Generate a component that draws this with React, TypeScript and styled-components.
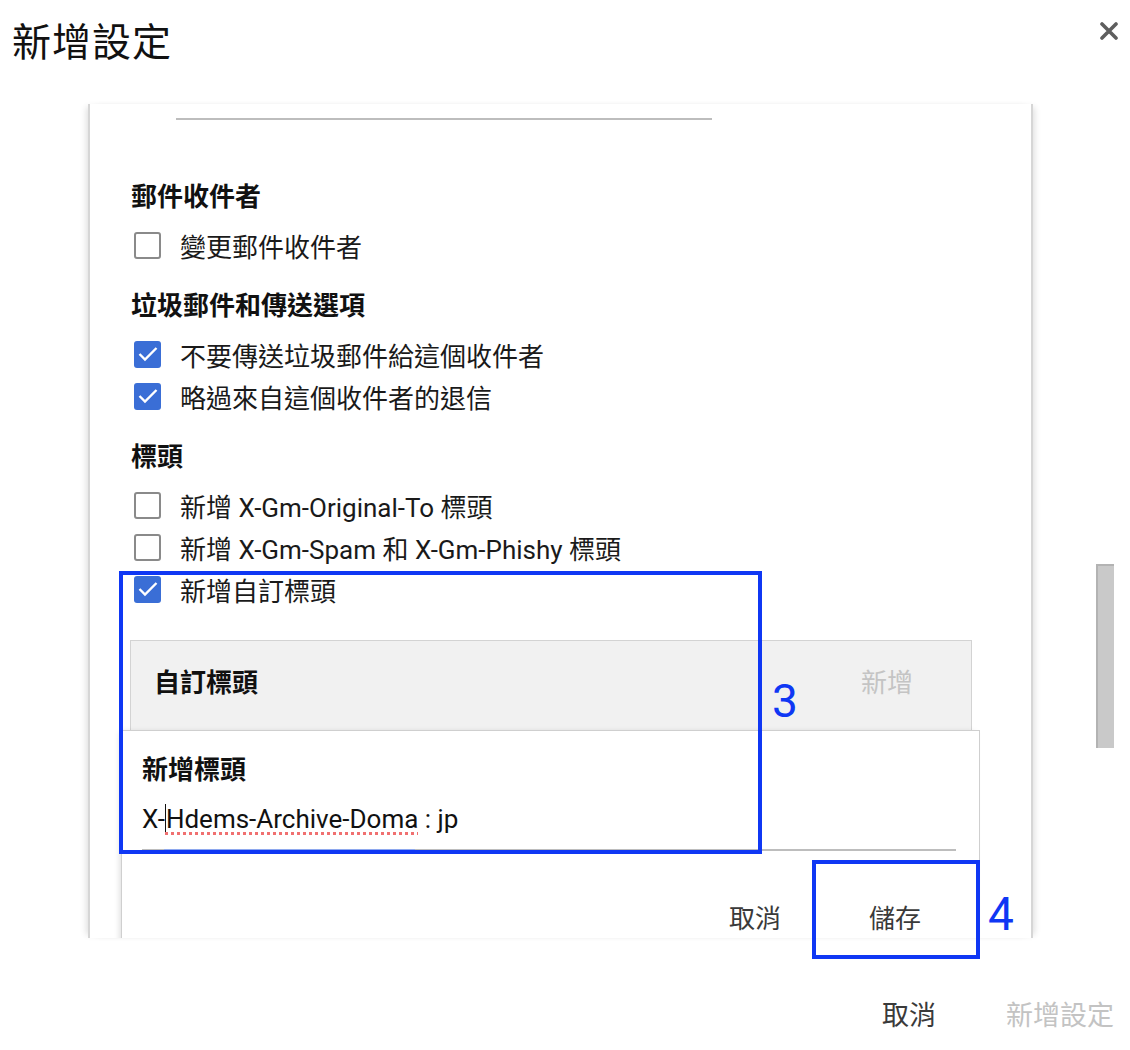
import React from 'react';
import styled, { createGlobalStyle } from 'styled-components';

const GlobalStyle = createGlobalStyle`
  html, body {
    margin: 0;
    padding: 0;
    background: #ffffff;
  }
  body {
    font-family: Roboto, "Noto Sans CJK TC", "Noto Sans", sans-serif;
    color: #111111;
  }
`;

const Page = styled.div`
  width: 1130px;
  height: 1050px;
  overflow: hidden;
  display: flex;
  flex-direction: column;
`;

const TopBar = styled.div`
  height: 104px;
  display: flex;
  align-items: flex-start;
  justify-content: space-between;
  padding: 0 12px;
`;

const Title = styled.h1`
  margin: 0;
  font-size: 39px;
  font-weight: 400;
  line-height: 86px;
  letter-spacing: 1px;
  color: #111;
`;

const CloseButton = styled.button`
  margin-top: 20px;
  margin-right: -2px;
  border: 0;
  background: none;
  padding: 0;
  width: 22px;
  height: 22px;
  display: flex;
  align-items: center;
  justify-content: center;
  cursor: pointer;
`;

const Body = styled.div`
  position: relative;
  display: flex;
  height: 834px;
`;

const Panel = styled.div`
  margin-left: 88px;
  width: 945px;
  height: 834px;
  overflow: hidden;
  background: #fff;
  border-left: 2px solid #d6d6d6;
  border-right: 2px solid #d6d6d6;
  box-sizing: border-box;
  box-shadow: -5px 0 6px -3px rgba(0, 0, 0, 0.12), 5px 0 6px -3px rgba(0, 0, 0, 0.12);
`;

const ScrollTrack = styled.div`
  margin-left: 63px;
  width: 18px;
  padding-top: 460px;
`;

const ScrollThumb = styled.div`
  height: 184px;
  background: #c9c9c9;
  border-left: 2px solid #b3b3b3;
  border-top: 2px solid #b3b3b3;
  box-sizing: border-box;
`;

const TopFieldLine = styled.div`
  margin: 14px 0 0 86px;
  width: 536px;
  height: 2px;
  background: #bdbdbd;
`;

const Section = styled.div<{ $first?: boolean }>`
  margin-top: ${({ $first }) => ($first ? '59px' : '22px')};
  padding-left: 41px;
`;

const SectionTitle = styled.div`
  font-size: 26px;
  font-weight: 700;
  line-height: 36px;
  margin-bottom: 9px;
`;

const Row = styled.label`
  display: flex;
  align-items: center;
  height: 42px;
  font-size: 26px;
  color: #1a1a1a;
`;

const Box = styled.span<{ $checked: boolean }>`
  width: 27px;
  height: 27px;
  margin-left: 3px;
  margin-right: 19px;
  box-sizing: border-box;
  border-radius: 3px;
  border: ${({ $checked }) => ($checked ? '0' : '2px solid #8a8a8a')};
  background: ${({ $checked }) => ($checked ? '#3a6ed6' : '#fff')};
  display: flex;
  align-items: center;
  justify-content: center;
  flex-shrink: 0;
`;

const CustomBlock = styled.div`
  margin-top: 30px;
  margin-left: 40px;
  width: 842px;
  height: 90px;
  box-sizing: border-box;
  background: #f1f1f1;
  border: 1px solid #d3d3d3;
  border-bottom: 0;
  display: flex;
  align-items: center;
  justify-content: space-between;
  padding: 0 58px 10px 23px;
`;

const CustomTitle = styled.span`
  font-size: 26px;
  font-weight: 700;
`;

const GhostAction = styled.span`
  font-size: 26px;
  color: #c4c4c4;
`;

const Popup = styled.div`
  margin-left: 31px;
  width: 859px;
  height: 280px;
  box-sizing: border-box;
  background: #fff;
  border: 1px solid #cfcfcf;
  box-shadow: -3px 0 6px -2px rgba(0, 0, 0, 0.15);
  padding: 20px 23px 0 20px;
`;

const PopupTitle = styled.div`
  font-size: 26px;
  font-weight: 700;
  line-height: 38px;
`;

const InputText = styled.div`
  margin-top: 10px;
  font-size: 26px;
  line-height: 40px;
  color: #111;
  white-space: nowrap;
  display: flex;
  align-items: center;
`;

const Caret = styled.span`
  display: inline-block;
  width: 1px;
  height: 30px;
  background: #111;
`;

const Misspelled = styled.span`
  text-decoration: underline dotted #f07070;
  text-decoration-thickness: 3px;
  text-underline-offset: 4px;
`;

const InputLine = styled.div`
  margin-top: 10px;
  width: 814px;
  height: 2px;
  background: linear-gradient(
    to right,
    #bdbdbd 0,
    #bdbdbd 22px,
    #8ea8ee 22px,
    #8ea8ee 273px,
    #bdbdbd 273px
  );
`;

const PopupActions = styled.div`
  display: flex;
  justify-content: flex-end;
  gap: 88px;
  margin-top: 48px;
  padding-right: 35px;
`;

const TextButton = styled.button<{ $muted?: boolean }>`
  border: 0;
  background: none;
  padding: 0;
  font-family: inherit;
  font-size: 26px;
  line-height: 40px;
  color: ${({ $muted }) => ($muted ? '#c3c3c3' : '#3a3a3a')};
  cursor: pointer;
`;

const Footer = styled.div`
  flex: 1;
  display: flex;
  justify-content: flex-end;
  align-items: flex-start;
  gap: 70px;
  padding: 58px 16px 0 0;
`;

const FooterButton = styled(TextButton)`
  font-size: 27px;
`;

const Marker = styled.div`
  position: absolute;
  border: 4px solid #0f37f4;
  box-sizing: border-box;
  pointer-events: none;
`;

const MarkerLabel = styled.span`
  position: absolute;
  font-family: Roboto, "Liberation Sans", sans-serif;
  font-size: 46px;
  line-height: 1;
  color: #0f37f4;
`;

const Check = () => (
  <svg width="22" height="18" viewBox="0 0 22 18">
    <polyline points="2.5,9 8,14.5 19.5,3" fill="none" stroke="#fff" strokeWidth="2.4" />
  </svg>
);

const Checkbox: React.FC<{ checked?: boolean; label: string }> = ({ checked = false, label }) => (
  <Row>
    <Box $checked={checked}>{checked && <Check />}</Box>
    {label}
  </Row>
);

const sections = [
  {
    title: '郵件收件者',
    items: [{ label: '變更郵件收件者', checked: false }],
  },
  {
    title: '垃圾郵件和傳送選項',
    items: [
      { label: '不要傳送垃圾郵件給這個收件者', checked: true },
      { label: '略過來自這個收件者的退信', checked: true },
    ],
  },
  {
    title: '標頭',
    items: [
      { label: '新增 X-Gm-Original-To 標頭', checked: false },
      { label: '新增 X-Gm-Spam 和 X-Gm-Phishy 標頭', checked: false },
      { label: '新增自訂標頭', checked: true },
    ],
  },
];

export default function App() {
  return (
    <Page>
      <GlobalStyle />
      <TopBar>
        <Title>新增設定</Title>
        <CloseButton aria-label="close">
          <svg width="18" height="18" viewBox="0 0 18 18">
            <path d="M2 2 L16 16 M16 2 L2 16" stroke="#5e5e5e" strokeWidth="3.6" strokeLinecap="round" />
          </svg>
        </CloseButton>
      </TopBar>

      <Body>
        <Panel>
          <TopFieldLine />
          {sections.map((s, i) => (
            <Section key={s.title} $first={i === 0}>
              <SectionTitle>{s.title}</SectionTitle>
              {s.items.map((it) => (
                <Checkbox key={it.label} label={it.label} checked={it.checked} />
              ))}
            </Section>
          ))}

          <CustomBlock>
            <CustomTitle>自訂標頭</CustomTitle>
            <GhostAction>新增</GhostAction>
          </CustomBlock>

          <Popup>
            <PopupTitle>新增標頭</PopupTitle>
            <InputText>
              X-<Caret />
              <Misspelled>Hdems-Archive-Doma</Misspelled>&nbsp;: jp
            </InputText>
            <InputLine />
            <PopupActions>
              <TextButton>取消</TextButton>
              <TextButton>儲存</TextButton>
            </PopupActions>
          </Popup>
        </Panel>

        <ScrollTrack>
          <ScrollThumb />
        </ScrollTrack>

        <Marker style={{ left: 119, top: 467, width: 643, height: 283 }} />
        <MarkerLabel style={{ left: 772, top: 574 }}>3</MarkerLabel>
        <Marker style={{ left: 812, top: 756, width: 168, height: 99 }} />
        <MarkerLabel style={{ left: 988, top: 787 }}>4</MarkerLabel>
      </Body>

      <Footer>
        <FooterButton>取消</FooterButton>
        <FooterButton $muted>新增設定</FooterButton>
      </Footer>
    </Page>
  );
}
